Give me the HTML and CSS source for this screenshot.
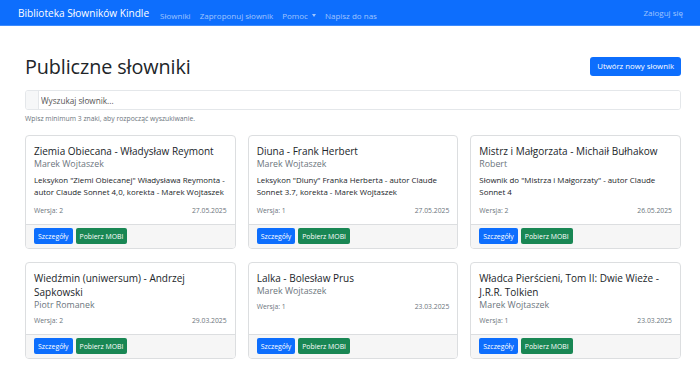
FILE: index.html
```html
<!DOCTYPE html>
<html lang="pl">
<head>
    <meta charset="utf-8">
    <title>Biblioteka Słowników Kindle</title>
    <link rel="stylesheet" href="styles.css">
</head>
<body>
    <nav class="navbar">
        <a class="brand" href="#">Biblioteka Słowników Kindle</a>
        <ul class="nav-links">
            <li><a href="#">Słowniki</a></li>
            <li><a href="#">Zaproponuj słownik</a></li>
            <li><a href="#" class="dropdown">Pomoc</a></li>
            <li><a href="#">Napisz do nas</a></li>
        </ul>
        <a class="login" href="#">Zaloguj się</a>
    </nav>

    <main class="container">
        <div class="page-header">
            <h1>Publiczne słowniki</h1>
            <a class="btn btn-primary btn-create" href="#">Utwórz nowy słownik</a>
        </div>

        <div class="search-group">
            <span class="search-addon"></span>
            <input type="text" class="search-input" placeholder="Wyszukaj słownik...">
        </div>
        <p class="search-help">Wpisz minimum 3 znaki, aby rozpocząć wyszukiwanie.</p>

        <div class="card-grid">
            <div class="card">
                <div class="card-body">
                    <h5 class="card-title">Ziemia Obiecana - Władysław Reymont</h5>
                    <div class="card-subtitle">Marek Wojtaszek</div>
                    <p class="card-text">Leksykon "Ziemi Obiecanej" Władysława Reymonta - autor Claude Sonnet 4,0, korekta - Marek Wojtaszek</p>
                    <div class="card-meta"><span>Wersja: 2</span><span>27.05.2025</span></div>
                </div>
                <div class="card-footer">
                    <a class="btn btn-primary" href="#">Szczegóły</a>
                    <a class="btn btn-success" href="#">Pobierz MOBI</a>
                </div>
            </div>

            <div class="card">
                <div class="card-body">
                    <h5 class="card-title">Diuna - Frank Herbert</h5>
                    <div class="card-subtitle">Marek Wojtaszek</div>
                    <p class="card-text">Leksykon "Diuny" Franka Herberta - autor Claude Sonnet 3.7, korekta - Marek Wojtaszek</p>
                    <div class="card-meta"><span>Wersja: 1</span><span>27.05.2025</span></div>
                </div>
                <div class="card-footer">
                    <a class="btn btn-primary" href="#">Szczegóły</a>
                    <a class="btn btn-success" href="#">Pobierz MOBI</a>
                </div>
            </div>

            <div class="card">
                <div class="card-body">
                    <h5 class="card-title">Mistrz i Małgorzata - Michaił Bułhakow</h5>
                    <div class="card-subtitle">Robert</div>
                    <p class="card-text">Słownik do "Mistrza i Małgorzaty" - autor Claude Sonnet 4</p>
                    <div class="card-meta"><span>Wersja: 2</span><span>26.05.2025</span></div>
                </div>
                <div class="card-footer">
                    <a class="btn btn-primary" href="#">Szczegóły</a>
                    <a class="btn btn-success" href="#">Pobierz MOBI</a>
                </div>
            </div>

            <div class="card">
                <div class="card-body">
                    <h5 class="card-title">Wiedźmin (uniwersum) - Andrzej Sapkowski</h5>
                    <div class="card-subtitle">Piotr Romanek</div>
                    <div class="card-meta"><span>Wersja: 2</span><span>29.03.2025</span></div>
                </div>
                <div class="card-footer">
                    <a class="btn btn-primary" href="#">Szczegóły</a>
                    <a class="btn btn-success" href="#">Pobierz MOBI</a>
                </div>
            </div>

            <div class="card">
                <div class="card-body">
                    <h5 class="card-title">Lalka - Bolesław Prus</h5>
                    <div class="card-subtitle">Marek Wojtaszek</div>
                    <div class="card-meta"><span>Wersja: 1</span><span>23.03.2025</span></div>
                </div>
                <div class="card-footer">
                    <a class="btn btn-primary" href="#">Szczegóły</a>
                    <a class="btn btn-success" href="#">Pobierz MOBI</a>
                </div>
            </div>

            <div class="card">
                <div class="card-body">
                    <h5 class="card-title">Władca Pierścieni, Tom II: Dwie Wieże - J.R.R. Tolkien</h5>
                    <div class="card-subtitle">Marek Wojtaszek</div>
                    <div class="card-meta"><span>Wersja: 1</span><span>23.03.2025</span></div>
                </div>
                <div class="card-footer">
                    <a class="btn btn-primary" href="#">Szczegóły</a>
                    <a class="btn btn-success" href="#">Pobierz MOBI</a>
                </div>
            </div>
        </div>
    </main>
</body>
</html>
```

FILE: styles.css
```css
body {
    margin: 0;
    font-family: "Open Sans", "Noto Sans", sans-serif;
    color: #212529;
    background-color: #fff;
}

a {
    text-decoration: none;
}

/* Navbar */
.navbar {
    display: flex;
    align-items: center;
    height: 25px;
    padding: 0 17px 0 18px;
    background-color: #0d6efd;
    border-bottom: 1px solid #3d8bfd;
}

.brand {
    color: #fff;
    font-size: 10.1px;
    margin-right: 11px;
}

.nav-links {
    display: flex;
    gap: 9px;
    list-style: none;
    margin: 0;
    padding: 0;
    flex: 1;
}

.nav-links a,
.login {
    color: rgba(255, 255, 255, 0.6);
    font-size: 8px;
}

.dropdown::after {
    content: "";
    display: inline-block;
    margin-left: 4px;
    vertical-align: 2px;
    border-top: 3px solid;
    border-left: 2.5px solid transparent;
    border-right: 2.5px solid transparent;
}

/* Page */
.container {
    width: 656px;
    margin-left: 25px;
}

.page-header {
    display: flex;
    justify-content: space-between;
    align-items: center;
    margin-top: 27px;
    height: 26px;
}

h1 {
    margin: 0;
    font-size: 19.8px;
    font-weight: 400;
    letter-spacing: -0.1px;
}

.btn {
    display: inline-flex;
    align-items: center;
    height: 16px;
    padding: 0 4px;
    font-size: 6.9px;
    color: #fff;
    border-radius: 2px;
}

.btn-primary {
    background-color: #0d6efd;
}

.btn-success {
    background-color: #198754;
}

.btn-create {
    height: 19px;
    padding: 0 7px;
    font-size: 7.8px;
    border-radius: 3px;
}

/* Search */
.search-group {
    display: flex;
    height: 20px;
    margin-top: 11px;
    border: 1px solid #e4e7ea;
    border-radius: 3px;
    box-sizing: border-box;
    overflow: hidden;
}

.search-addon {
    width: 12px;
    background-color: #f6f7f8;
    border-right: 1px solid #e4e7ea;
}

.search-input {
    flex: 1;
    border: none;
    padding: 0 2px;
    font-family: inherit;
    font-size: 8.2px;
    outline: none;
}

.search-input::placeholder {
    color: #555;
}

.search-help {
    margin: 4px 0 0;
    font-size: 6.8px;
    color: #6c757d;
}

/* Cards */
.card-grid {
    display: grid;
    grid-template-columns: repeat(3, 1fr);
    column-gap: 12px;
    row-gap: 13px;
    margin-top: 12px;
}

.card {
    display: flex;
    flex-direction: column;
    border: 1px solid #dcdee0;
    border-radius: 4px;
    overflow: hidden;
}

.card-body {
    flex: 1;
    padding: 8px 8px 7px;
}

.card-title {
    margin: 0;
    font-size: 10px;
    font-weight: 400;
    line-height: 14px;
}

.card-subtitle {
    margin-bottom: 4px;
    font-size: 8.8px;
    line-height: 12px;
    color: #6c757d;
}

.card-text {
    margin: 0 0 7px;
    font-size: 7.9px;
    line-height: 12px;
}

.card-meta {
    display: flex;
    justify-content: space-between;
    font-size: 6.8px;
    line-height: 12px;
    color: #6c757d;
}

.card-footer {
    display: flex;
    gap: 3px;
    padding: 3px 8px 4px;
    background-color: #f6f6f6;
    border-top: 1px solid #dcdee0;
}
```
